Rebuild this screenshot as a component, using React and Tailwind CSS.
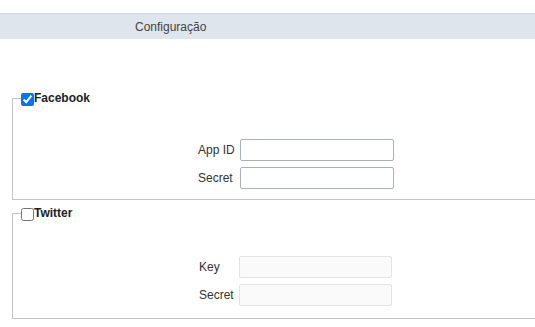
import { useState } from 'react';

const font = { fontFamily: '"Liberation Sans", Arial, sans-serif' };

const inputOn = 'h-[22px] w-[154px] rounded-[2px] border border-[#a9b1bd] bg-white px-1 text-xs outline-none';
const inputOff = 'h-[22px] w-[153px] rounded-[2px] border border-[#e3e3e3] bg-[#fafafa] px-1 text-xs outline-none';

const Provider = ({ name, checked, onToggle, fields, labelCol, inputClass, shift, top, bottom }) => (
  <fieldset className={`ml-3 border border-r-0 border-[#c4c4c4] pl-2 pr-0 ${bottom}`}>
    <legend className="flex w-full items-end">
      <input type="checkbox" checked={checked} onChange={onToggle} className="m-0 h-[13px] w-[13px]" />
      <span className="text-xs font-bold leading-[15px] text-[#222]">{name}</span>
    </legend>
    <div className={`grid items-center gap-y-[6px] ${labelCol} ${shift} ${top}`}>
      {fields.map((field) => (
        <div key={field} className="contents">
          <span className="text-xs text-[#333]">{field}</span>
          <input type="text" disabled={!checked} className={inputClass} />
        </div>
      ))}
    </div>
  </fieldset>
);

const App = () => {
  const [facebook, setFacebook] = useState(true);
  const [twitter, setTwitter] = useState(false);

  return (
    <main className="min-h-screen bg-white pt-[13px]" style={font}>
      <div className="flex h-[26px] items-center border-t border-[#d3d9e0] bg-[#dfe5ec] pl-[135px] text-xs text-[#444]">
        Configuração
      </div>

      <div className="mt-[52px]">
        <Provider
          name="Facebook"
          checked={facebook}
          onToggle={() => setFacebook(!facebook)}
          fields={['App ID', 'Secret']}
          labelCol="grid-cols-[42px_154px]"
          inputClass={facebook ? inputOn : inputOff}
          shift="ml-[177px]"
          top="mt-[33px]"
          bottom="pb-[10px]"
        />
      </div>
      <div className="mt-[6px]">
        <Provider
          name="Twitter"
          checked={twitter}
          onToggle={() => setTwitter(!twitter)}
          fields={['Key', 'Secret']}
          labelCol="grid-cols-[40px_153px]"
          inputClass={twitter ? inputOn : inputOff}
          shift="ml-[178px]"
          top="mt-[35px]"
          bottom="pb-[12px]"
        />
      </div>
    </main>
  );
};

export default App;
